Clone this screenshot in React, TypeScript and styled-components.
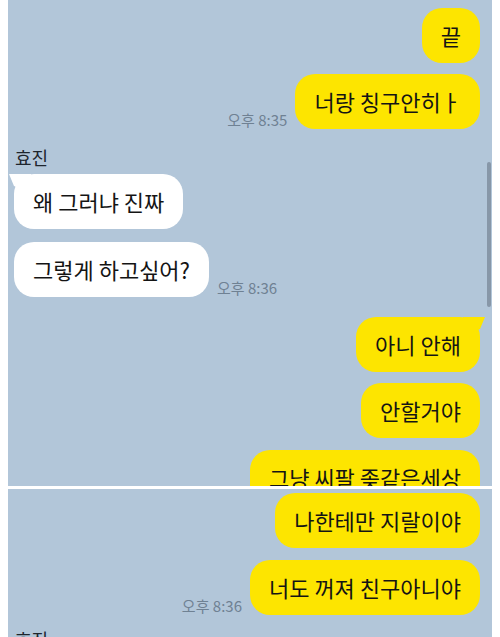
import React from 'react';
import styled, { createGlobalStyle, css } from 'styled-components';

const GlobalStyle = createGlobalStyle`
  html, body {
    margin: 0;
    padding: 0;
    background: #ffffff;
  }
  body {
    font-family: "Noto Sans CJK KR", "Noto Sans", sans-serif;
    color: #141414;
  }
`;

const Page = styled.div`
  width: 500px;
  height: 637px;
  padding: 0 8px;
  box-sizing: border-box;
  display: flex;
  flex-direction: column;
  gap: 3px;
  overflow: hidden;
`;

const Panel = styled.div<{ $height?: number }>`
  position: relative;
  flex: ${p => (p.$height ? `0 0 ${p.$height}px` : '1 1 auto')};
  background: #b2c6d9;
  overflow: hidden;
`;

const Feed = styled.div<{ $top: number }>`
  display: flex;
  flex-direction: column;
  padding: ${p => p.$top}px 12px 0 6px;
`;

const Row = styled.div<{ $mine?: boolean; $gap?: number }>`
  display: flex;
  justify-content: ${p => (p.$mine ? 'flex-end' : 'flex-start')};
  align-items: flex-end;
  gap: 8px;
  margin-top: ${p => p.$gap ?? 0}px;
`;

const Bubble = styled.div<{ $mine?: boolean; $tail?: boolean }>`
  position: relative;
  background: ${p => (p.$mine ? '#fde500' : '#ffffff')};
  border-radius: 20px;
  padding: 15px 19px;
  font-size: 22px;
  line-height: 25px;
  white-space: nowrap;

  ${p =>
    p.$tail &&
    css`
      &::before {
        content: '';
        position: absolute;
        top: 0;
        width: 22px;
        height: 18px;
        background: inherit;
        ${p.$mine
          ? css`
              right: -5px;
              clip-path: polygon(100% 0, 0 0, 0 100%, calc(100% - 5px) 12px);
            `
          : css`
              left: -5px;
              clip-path: polygon(0 0, 100% 0, 100% 100%, 5px 12px);
            `}
      }
    `}
`;

const Time = styled.span`
  font-size: 15px;
  line-height: 17px;
  color: #6f8193;
  margin-bottom: 1px;
  white-space: nowrap;
`;

const Name = styled.div<{ $gap: number }>`
  font-size: 18px;
  line-height: 22px;
  color: #1e252d;
  padding-left: 1px;
  margin-top: ${p => p.$gap}px;
  margin-bottom: 6px;
`;

const Scrollbar = styled.div`
  position: absolute;
  right: 1px;
  top: 162px;
  width: 4px;
  height: 145px;
  border-radius: 2px;
  background: #8797a8;
`;

type Msg = {
  text: string;
  mine?: boolean;
  tail?: boolean;
  time?: string;
  gap?: number;
};

const Message: React.FC<Msg> = ({ text, mine, tail, time, gap }) => (
  <Row $mine={mine} $gap={gap}>
    {mine && time && <Time>{time}</Time>}
    <Bubble $mine={mine} $tail={tail}>{text}</Bubble>
    {!mine && time && <Time>{time}</Time>}
  </Row>
);

const App: React.FC = () => {
  return (
    <>
      <GlobalStyle />
      <Page>
        <Panel $height={486}>
          <Feed $top={8}>
            <Message mine text="끝" />
            <Message mine text="너랑 칭구안히ㅏ" time="오후 8:35" gap={11} />
            <Name $gap={17}>효진</Name>
            <Message tail text="왜 그러냐 진짜" />
            <Message text="그렇게 하고싶어?" time="오후 8:36" gap={13} />
            <Message mine tail text="아니 안해" gap={20} />
            <Message mine text="안할거야" gap={11} />
            <Message mine text="그냥 씨팔 좆같은세상" gap={12} />
          </Feed>
          <Scrollbar />
        </Panel>
        <Panel>
          <Feed $top={4}>
            <Message mine text="나한테만 지랄이야" />
            <Message mine text="너도 꺼져 친구아니야" time="오후 8:36" gap={12} />
            <Name $gap={13}>효진</Name>
          </Feed>
        </Panel>
      </Page>
    </>
  );
};

export default App;
